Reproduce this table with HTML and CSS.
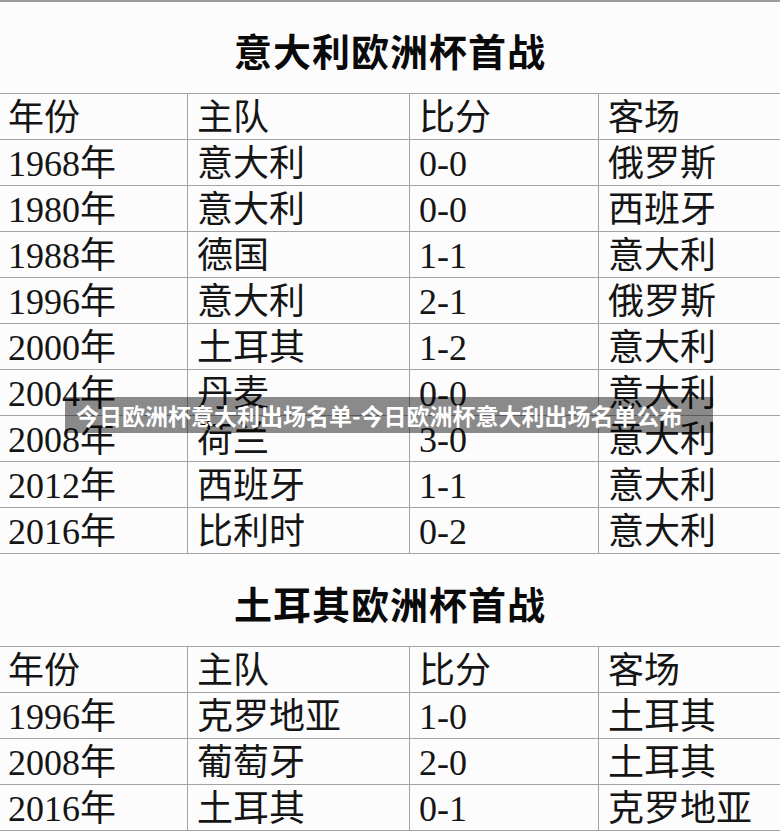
FILE: index.html
```html
<!DOCTYPE html>
<html lang="zh">
<head>
<meta charset="utf-8">
<link rel="stylesheet" href="styles.css">
</head>
<body>
<div class="page">
  <h2 class="title">意大利欧洲杯首战</h2>
  <table class="grid">
    <colgroup><col class="c1"><col class="c2"><col class="c3"><col class="c4"></colgroup>
    <tr><td>年份</td><td>主队</td><td>比分</td><td>客场</td></tr>
    <tr><td>1968年</td><td>意大利</td><td>0-0</td><td>俄罗斯</td></tr>
    <tr><td>1980年</td><td>意大利</td><td>0-0</td><td>西班牙</td></tr>
    <tr><td>1988年</td><td>德国</td><td>1-1</td><td>意大利</td></tr>
    <tr><td>1996年</td><td>意大利</td><td>2-1</td><td>俄罗斯</td></tr>
    <tr><td>2000年</td><td>土耳其</td><td>1-2</td><td>意大利</td></tr>
    <tr><td>2004年</td><td>丹麦</td><td>0-0</td><td>意大利</td></tr>
    <tr><td>2008年</td><td>荷兰</td><td>3-0</td><td>意大利</td></tr>
    <tr><td>2012年</td><td>西班牙</td><td>1-1</td><td>意大利</td></tr>
    <tr><td>2016年</td><td>比利时</td><td>0-2</td><td>意大利</td></tr>
  </table>
  <h2 class="title title2">土耳其欧洲杯首战</h2>
  <table class="grid">
    <colgroup><col class="c1"><col class="c2"><col class="c3"><col class="c4"></colgroup>
    <tr><td>年份</td><td>主队</td><td>比分</td><td>客场</td></tr>
    <tr><td>1996年</td><td>克罗地亚</td><td>1-0</td><td>土耳其</td></tr>
    <tr><td>2008年</td><td>葡萄牙</td><td>2-0</td><td>土耳其</td></tr>
    <tr><td>2016年</td><td>土耳其</td><td>0-1</td><td>克罗地亚</td></tr>
  </table>
  <div class="banner">今日欧洲杯意大利出场名单-今日欧洲杯意大利出场名单公布</div>
</div>
</body>
</html>
```
FILE: styles.css
```css
html, body {
  margin: 0;
  padding: 0;
  background: #fcfcfd;
}
.page {
  position: relative;
  width: 780px;
  height: 832px;
  overflow: hidden;
  border-top: 2px solid #9c9c9e;
  box-sizing: border-box;
  color: #111;
  font-family: "Liberation Serif", "Noto Sans CJK SC", serif;
}
.title {
  margin: 0;
  height: 91px;
  display: flex;
  align-items: center;
  justify-content: center;
  padding-top: 4px;
  box-sizing: border-box;
  font-family: "Noto Sans CJK SC", sans-serif;
  font-size: 38px;
  font-weight: 700;
  letter-spacing: 1px;
  color: #0a0a0a;
}
.title2 {
  height: 92px;
}
.grid {
  border-collapse: collapse;
  table-layout: fixed;
  width: 782px;
  margin-left: -1px;
}
.c1 { width: 188px; }
.c2 { width: 222px; }
.c3 { width: 189px; }
.c4 { width: 183px; }
.grid td {
  border: 1px solid #a4a4a8;
  height: 41px;
  padding: 4px 0 0 9px;
  font-size: 36px;
  line-height: 41px;
  white-space: nowrap;
  color: #151515;
  font-weight: 400;
  vertical-align: top;
}
.grid td:first-child {
  padding-left: 8px;
}
.banner {
  position: absolute;
  left: 65px;
  top: 395px;
  width: 648px;
  height: 36px;
  padding-left: 11px;
  box-sizing: border-box;
  background: rgba(0, 0, 0, 0.45);
  color: #fff;
  font-family: "Noto Sans CJK SC", sans-serif;
  font-weight: 700;
  font-size: 23px;
  line-height: 36px;
  white-space: nowrap;
}
```
